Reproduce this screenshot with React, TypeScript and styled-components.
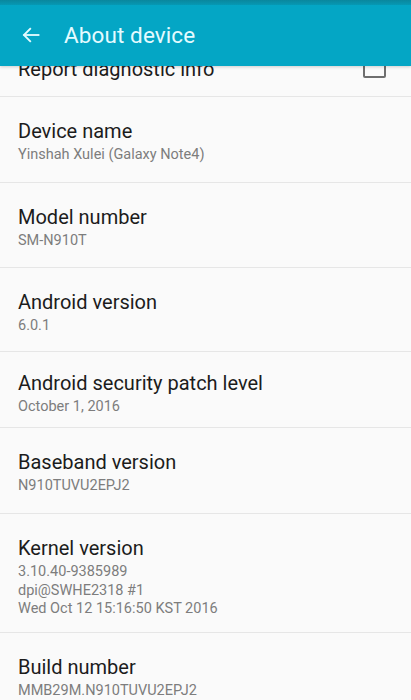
import React from 'react';
import styled, { createGlobalStyle } from 'styled-components';

const GlobalStyle = createGlobalStyle`
    html, body {
        margin: 0;
        padding: 0;
        background: #fafafa;
    }
    body {
        font-family: Roboto, "Noto Sans", "Liberation Sans", sans-serif;
        -webkit-font-smoothing: antialiased;
    }
`;

const Screen = styled.div`
    width: 411px;
    height: 700px;
    overflow: hidden;
    display: flex;
    flex-direction: column;
    background: #fafafa;
`;

const Header = styled.header`
    display: flex;
    flex-direction: column;
    flex-shrink: 0;
    position: relative;
    z-index: 2;
    box-shadow: 0 1px 3px rgba(0, 0, 0, 0.18);
`;

const StatusStrip = styled.div`
    height: 5px;
    background: linear-gradient(#0a879d, #0698b4);
`;

const Toolbar = styled.div`
    height: 61px;
    background: #04a6c5;
    display: flex;
    align-items: center;
    padding-left: 20px;
    gap: 22px;
`;

const BackButton = styled.div`
    width: 22px;
    height: 22px;
    display: flex;
    align-items: center;
    justify-content: center;
    margin-top: -1px;
`;

const Title = styled.h1`
    margin: 0;
    font-size: 22.5px;
    font-weight: 400;
    color: #e4fbff;
    letter-spacing: 0.1px;
    margin-top: -1px;
`;

const List = styled.div`
    display: flex;
    flex-direction: column;
`;

const PartialRow = styled.div`
    height: 30px;
    overflow: hidden;
    display: flex;
    align-items: flex-end;
    justify-content: space-between;
    padding: 0 25px 0 18px;
    border-bottom: 1px solid #e6e6e6;
`;

const PartialLabel = styled.div`
    font-size: 20px;
    line-height: 24px;
    color: #1c1c1c;
    margin-bottom: 15px;
`;

const CheckBox = styled.div`
    width: 19px;
    height: 19px;
    border: 2px solid #6e6e6e;
    border-radius: 2px;
    margin-bottom: 18px;
`;

const Row = styled.div<{ $height: number }>`
    height: ${props => props.$height}px;
    box-sizing: border-box;
    padding: ${props => (props.$height < 80 ? 18 : 21)}px 18px 0;
    border-bottom: 1px solid #e6e6e6;
    display: flex;
    flex-direction: column;
`;

const RowTitle = styled.div`
    font-size: 20px;
    line-height: 26px;
    color: #1c1c1c;
    margin-bottom: 2px;
`;

const RowValue = styled.div`
    font-size: 14.5px;
    line-height: 18.5px;
    color: #7d7d7d;
`;

const BackArrow = () => (
    <svg width="20" height="20" viewBox="0 0 24 24" fill="none" stroke="#e4fbff" strokeWidth="2.2" strokeLinecap="square">
        <path d="M21 12H4" />
        <path d="M11 4.5L3.5 12L11 19.5" />
    </svg>
);

const items = [
    { title: 'Device name', value: ['Yinshah Xulei (Galaxy Note4)'], height: 86 },
    { title: 'Model number', value: ['SM-N910T'], height: 85 },
    { title: 'Android version', value: ['6.0.1'], height: 84 },
    { title: 'Android security patch level', value: ['October 1, 2016'], height: 76 },
    { title: 'Baseband version', value: ['N910TUVU2EPJ2'], height: 86 },
    {
        title: 'Kernel version',
        value: ['3.10.40-9385989', 'dpi@SWHE2318 #1', 'Wed Oct 12 15:16:50 KST 2016'],
        height: 119,
    },
    { title: 'Build number', value: ['MMB29M.N910TUVU2EPJ2'], height: 86 },
];

export default function App() {
    return (
        <>
            <GlobalStyle />
            <Screen>
                <Header>
                    <StatusStrip />
                    <Toolbar>
                        <BackButton>
                            <BackArrow />
                        </BackButton>
                        <Title>About device</Title>
                    </Toolbar>
                </Header>
                <List>
                    <PartialRow>
                        <PartialLabel>Report diagnostic info</PartialLabel>
                        <CheckBox />
                    </PartialRow>
                    {items.map(item => (
                        <Row key={item.title} $height={item.height}>
                            <RowTitle>{item.title}</RowTitle>
                            {item.value.map(line => (
                                <RowValue key={line}>{line}</RowValue>
                            ))}
                        </Row>
                    ))}
                </List>
            </Screen>
        </>
    );
}
